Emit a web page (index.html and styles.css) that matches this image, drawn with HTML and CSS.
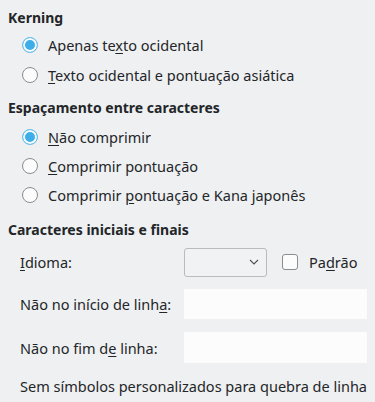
FILE: index.html
```html
<!DOCTYPE html>
<html lang="pt">
<head>
<meta charset="utf-8">
<link rel="stylesheet" href="styles.css">
</head>
<body>
<div class="page">
  <section class="group group-kerning">
    <h2 class="heading">Kerning</h2>
    <label class="radio-row"><span class="radio checked"></span><span>Apenas te<u>x</u>to ocidental</span></label>
    <label class="radio-row"><span class="radio"></span><span><u>T</u>exto ocidental e pontuação asiática</span></label>
  </section>
  <section class="group group-spacing">
    <h2 class="heading">Espaçamento entre caracteres</h2>
    <label class="radio-row"><span class="radio checked"></span><span><u>N</u>ão comprimir</span></label>
    <label class="radio-row"><span class="radio"></span><span><u>C</u>omprimir pontuação</span></label>
    <label class="radio-row"><span class="radio"></span><span>Comprimir <u>p</u>ontuação e Kana japonês</span></label>
  </section>
  <section class="group group-chars">
    <h2 class="heading">Caracteres iniciais e finais</h2>
    <div class="form-row lang-row">
      <span class="label"><u>I</u>dioma:</span>
      <div class="combo"><svg width="10" height="6" viewBox="0 0 10 6"><path d="M1 1 L5 5 L9 1" fill="none" stroke="#4d5053" stroke-width="1.1"/></svg></div>
      <label class="check-wrap"><span class="checkbox"></span><span>Pa<u>d</u>rão</span></label>
    </div>
    <div class="form-row field-row">
      <span class="label">Não no início de linh<u>a</u>:</span>
      <div class="field"></div>
    </div>
    <div class="form-row field-row">
      <span class="label">Não no fim d<u>e</u> linha:</span>
      <div class="field"></div>
    </div>
    <p class="note">Sem símbolos personalizados para quebra de linha</p>
  </section>
</div>
</body>
</html>
```
FILE: styles.css
```css
* { box-sizing: border-box; }
html, body { margin: 0; padding: 0; }
body {
  background: #eff0f1;
  color: #232629;
  font-family: "Noto Sans", "Open Sans", sans-serif;
  font-size: 14.5px;
  width: 375px;
  height: 402px;
  overflow: hidden;
}
u { text-decoration: underline; text-underline-offset: 2px; text-decoration-thickness: 1px; }
.page { padding: 8px 8px 0 8px; display: flex; flex-direction: column; }
.heading { font-size: 14px; font-weight: bold; margin: 0; height: 20px; line-height: 20px; }
.group { display: flex; flex-direction: column; }
.group-kerning .heading { margin-bottom: 2px; }
.group-kerning .radio-row { height: 30px; }
.group-kerning { margin-bottom: 8px; }
.group-spacing .heading { margin-bottom: 4px; }
.group-spacing .radio-row { height: 29px; }
.group-spacing { margin-bottom: 11px; }
.group-chars .heading { margin-bottom: 7px; }
.radio-row { display: flex; align-items: center; padding-left: 14px; gap: 10px; }
.radio {
  width: 16px; height: 16px; border-radius: 50%;
  border: 1px solid #8a8c8e; background: #fcfcfc; flex: none;
}
.radio.checked {
  border: 1px solid #6ec1ec;
  background: #3daee9;
  box-shadow: inset 0 0 0 2px #fcfcfc;
}
.form-row { display: flex; align-items: center; padding-left: 12px; }
.label { width: 164px; flex: none; }
.lang-row { height: 30px; }
.combo {
  width: 83px; height: 29px; border: 1px solid #b9bbbd; border-radius: 3px;
  background: #f1f2f3; display: flex; align-items: center; justify-content: flex-end; padding-right: 7px;
}
.check-wrap { display: flex; align-items: center; gap: 11px; margin-left: 15px; }
.checkbox { width: 16px; height: 16px; border: 1px solid #8a8c8e; border-radius: 3px; background: #fcfcfc; }
.field { width: 183px; height: 30px; background: #fcfcfc; }
.lang-row + .field-row { margin-top: 12px; }
.field-row + .field-row { margin-top: 13px; }
.field-row + .field-row .field { height: 31px; }
.note { margin: 13px 0 0 12px; line-height: 20px; }
```
